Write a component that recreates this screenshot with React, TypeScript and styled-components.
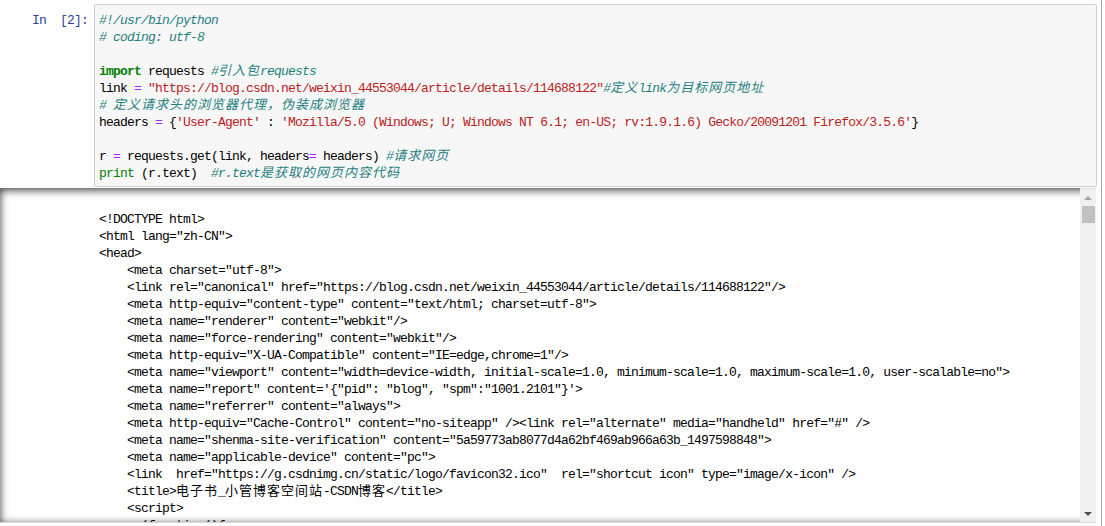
import React from "react";
import styled, { createGlobalStyle, css } from "styled-components";

const GlobalStyle = createGlobalStyle`
  html, body {
    margin: 0;
    padding: 0;
    background: #ffffff;
    overflow: hidden;
  }
  body {
    font-family: "Liberation Mono", "DejaVu Sans Mono", monospace;
    font-size: 13px;
    letter-spacing: -0.8px;
    color: #000000;
  }
`;

const Notebook = styled.div`
  width: 1101px;
  height: 526px;
  border-right: 1px solid #a9a9a9;
  display: flex;
  flex-direction: column;
  overflow: hidden;
`;

const InputRow = styled.div`
  display: flex;
  padding: 4px 4px 0 0;
`;

const Prompt = styled.div`
  width: 94px;
  flex: none;
  box-sizing: border-box;
  padding: 8px 6px 0 0;
  text-align: right;
  white-space: pre;
  line-height: 17px;
  color: #303f9f;
`;

const InputArea = styled.div`
  flex: 1;
  border: 1px solid #cfcfcf;
  border-radius: 2px;
  background: #f7f7f7;
  padding: 7px 4px 4px;
`;

const Line = styled.div`
  height: 17px;
  line-height: 17px;
  white-space: pre;
`;

type Kind = "plain" | "comment" | "keyword" | "builtin" | "string" | "operator";

const Token = styled.span<{ $kind: Kind }>`
  ${({ $kind }) => {
    switch ($kind) {
      case "comment":
        return css`color: #1f7f7f; font-style: italic;`;
      case "keyword":
        return css`color: #008000; font-weight: bold;`;
      case "builtin":
        return css`color: #008000;`;
      case "string":
        return css`color: #ba2121;`;
      case "operator":
        return css`color: #aa22ff;`;
      default:
        return css`color: #000000;`;
    }
  }}
`;

const Cjk = styled.span`
  font-family: "Noto Sans CJK SC", sans-serif;
  font-size: 13px;
  line-height: 1;
  letter-spacing: 1px;
`;

const Output = styled.div`
  margin-top: 1px;
  width: 1096px;
  height: 334px;
  flex: none;
  display: flex;
  box-shadow: inset 0 2px 8px rgba(0, 0, 0, 0.8);
  border-bottom: 1px solid #dadada;
`;

const OutputScroll = styled.div`
  flex: 1;
  display: flex;
  overflow: hidden;
`;

const OutputPromptSpace = styled.div`
  width: 94px;
  flex: none;
`;

const OutputPre = styled.div`
  padding: 23px 0 0 5px;
  flex: 1;
`;

const Scrollbar = styled.div`
  width: 16px;
  flex: none;
  background: #f0f0f0;
  border-top: 1px solid #dedede;
  display: flex;
  flex-direction: column;
`;

const ArrowButton = styled.div`
  height: 17px;
  display: flex;
  align-items: center;
  justify-content: center;
`;

const Arrow = styled.span<{ $dir: "up" | "down" }>`
  width: 0;
  height: 0;
  border-left: 4px solid transparent;
  border-right: 4px solid transparent;
  ${({ $dir }) =>
    $dir === "up"
      ? css`border-bottom: 4px solid #a3a3a3;`
      : css`border-top: 4px solid #505050;`}
`;

const Thumb = styled.div`
  height: 17px;
  margin: 0 1px 0 2px;
  background: #c1c1c1;
`;

const Track = styled.div`
  flex: 1;
`;

const CJK_RE = /([\u3000-\u303f\u4e00-\u9fff\uff00-\uffef]+)/;

function withCjk(text: string) {
  return text.split(CJK_RE).map((part, i) =>
    i % 2 === 1 ? <Cjk key={i}>{part}</Cjk> : part
  );
}

type Tok = [Kind, string];

const codeLines: Tok[][] = [
  [["comment", "#!/usr/bin/python"]],
  [["comment", "# coding: utf-8"]],
  [],
  [
    ["keyword", "import"],
    ["plain", " requests "],
    ["comment", "#引入包requests"],
  ],
  [
    ["plain", "link "],
    ["operator", "="],
    ["plain", " "],
    ["string", "\"https://blog.csdn.net/weixin_44553044/article/details/114688122\""],
    ["comment", "#定义link为目标网页地址"],
  ],
  [["comment", "# 定义请求头的浏览器代理，伪装成浏览器"]],
  [
    ["plain", "headers "],
    ["operator", "="],
    ["plain", " {"],
    ["string", "'User-Agent'"],
    ["plain", " : "],
    [
      "string",
      "'Mozilla/5.0 (Windows; U; Windows NT 6.1; en-US; rv:1.9.1.6) Gecko/20091201 Firefox/3.5.6'",
    ],
    ["plain", "}"],
  ],
  [],
  [
    ["plain", "r "],
    ["operator", "="],
    ["plain", " requests.get(link, headers"],
    ["operator", "="],
    ["plain", " headers) "],
    ["comment", "#请求网页"],
  ],
  [
    ["builtin", "print"],
    ["plain", " (r.text)  "],
    ["comment", "#r.text是获取的网页内容代码"],
  ],
];

const outputLines: string[] = [
  "<!DOCTYPE html>",
  "<html lang=\"zh-CN\">",
  "<head>",
  "    <meta charset=\"utf-8\">",
  "    <link rel=\"canonical\" href=\"https://blog.csdn.net/weixin_44553044/article/details/114688122\"/>",
  "    <meta http-equiv=\"content-type\" content=\"text/html; charset=utf-8\">",
  "    <meta name=\"renderer\" content=\"webkit\"/>",
  "    <meta name=\"force-rendering\" content=\"webkit\"/>",
  "    <meta http-equiv=\"X-UA-Compatible\" content=\"IE=edge,chrome=1\"/>",
  "    <meta name=\"viewport\" content=\"width=device-width, initial-scale=1.0, minimum-scale=1.0, maximum-scale=1.0, user-scalable=no\">",
  "    <meta name=\"report\" content='{\"pid\": \"blog\", \"spm\":\"1001.2101\"}'>",
  "    <meta name=\"referrer\" content=\"always\">",
  "    <meta http-equiv=\"Cache-Control\" content=\"no-siteapp\" /><link rel=\"alternate\" media=\"handheld\" href=\"#\" />",
  "    <meta name=\"shenma-site-verification\" content=\"5a59773ab8077d4a62bf469ab966a63b_1497598848\">",
  "    <meta name=\"applicable-device\" content=\"pc\">",
  "    <link  href=\"https://g.csdnimg.cn/static/logo/favicon32.ico\"  rel=\"shortcut icon\" type=\"image/x-icon\" />",
  "    <title>电子书_小管博客空间站-CSDN博客</title>",
  "    <script>",
  "      (function(){",
  "        var s = document.createElement(\"script\");",
];

export default function App() {
  return (
    <>
      <GlobalStyle />
      <Notebook>
        <InputRow>
          <Prompt>{"In  [2]:"}</Prompt>
          <InputArea>
            {codeLines.map((toks, i) => (
              <Line key={i}>
                {toks.map(([kind, text], j) => (
                  <Token key={j} $kind={kind}>
                    {withCjk(text)}
                  </Token>
                ))}
              </Line>
            ))}
          </InputArea>
        </InputRow>
        <Output>
          <OutputScroll>
            <OutputPromptSpace />
            <OutputPre>
              {outputLines.map((l, i) => (
                <Line key={i}>{withCjk(l)}</Line>
              ))}
            </OutputPre>
          </OutputScroll>
          <Scrollbar>
            <ArrowButton>
              <Arrow $dir="up" />
            </ArrowButton>
            <Thumb />
            <Track />
            <ArrowButton>
              <Arrow $dir="down" />
            </ArrowButton>
          </Scrollbar>
        </Output>
      </Notebook>
    </>
  );
}
